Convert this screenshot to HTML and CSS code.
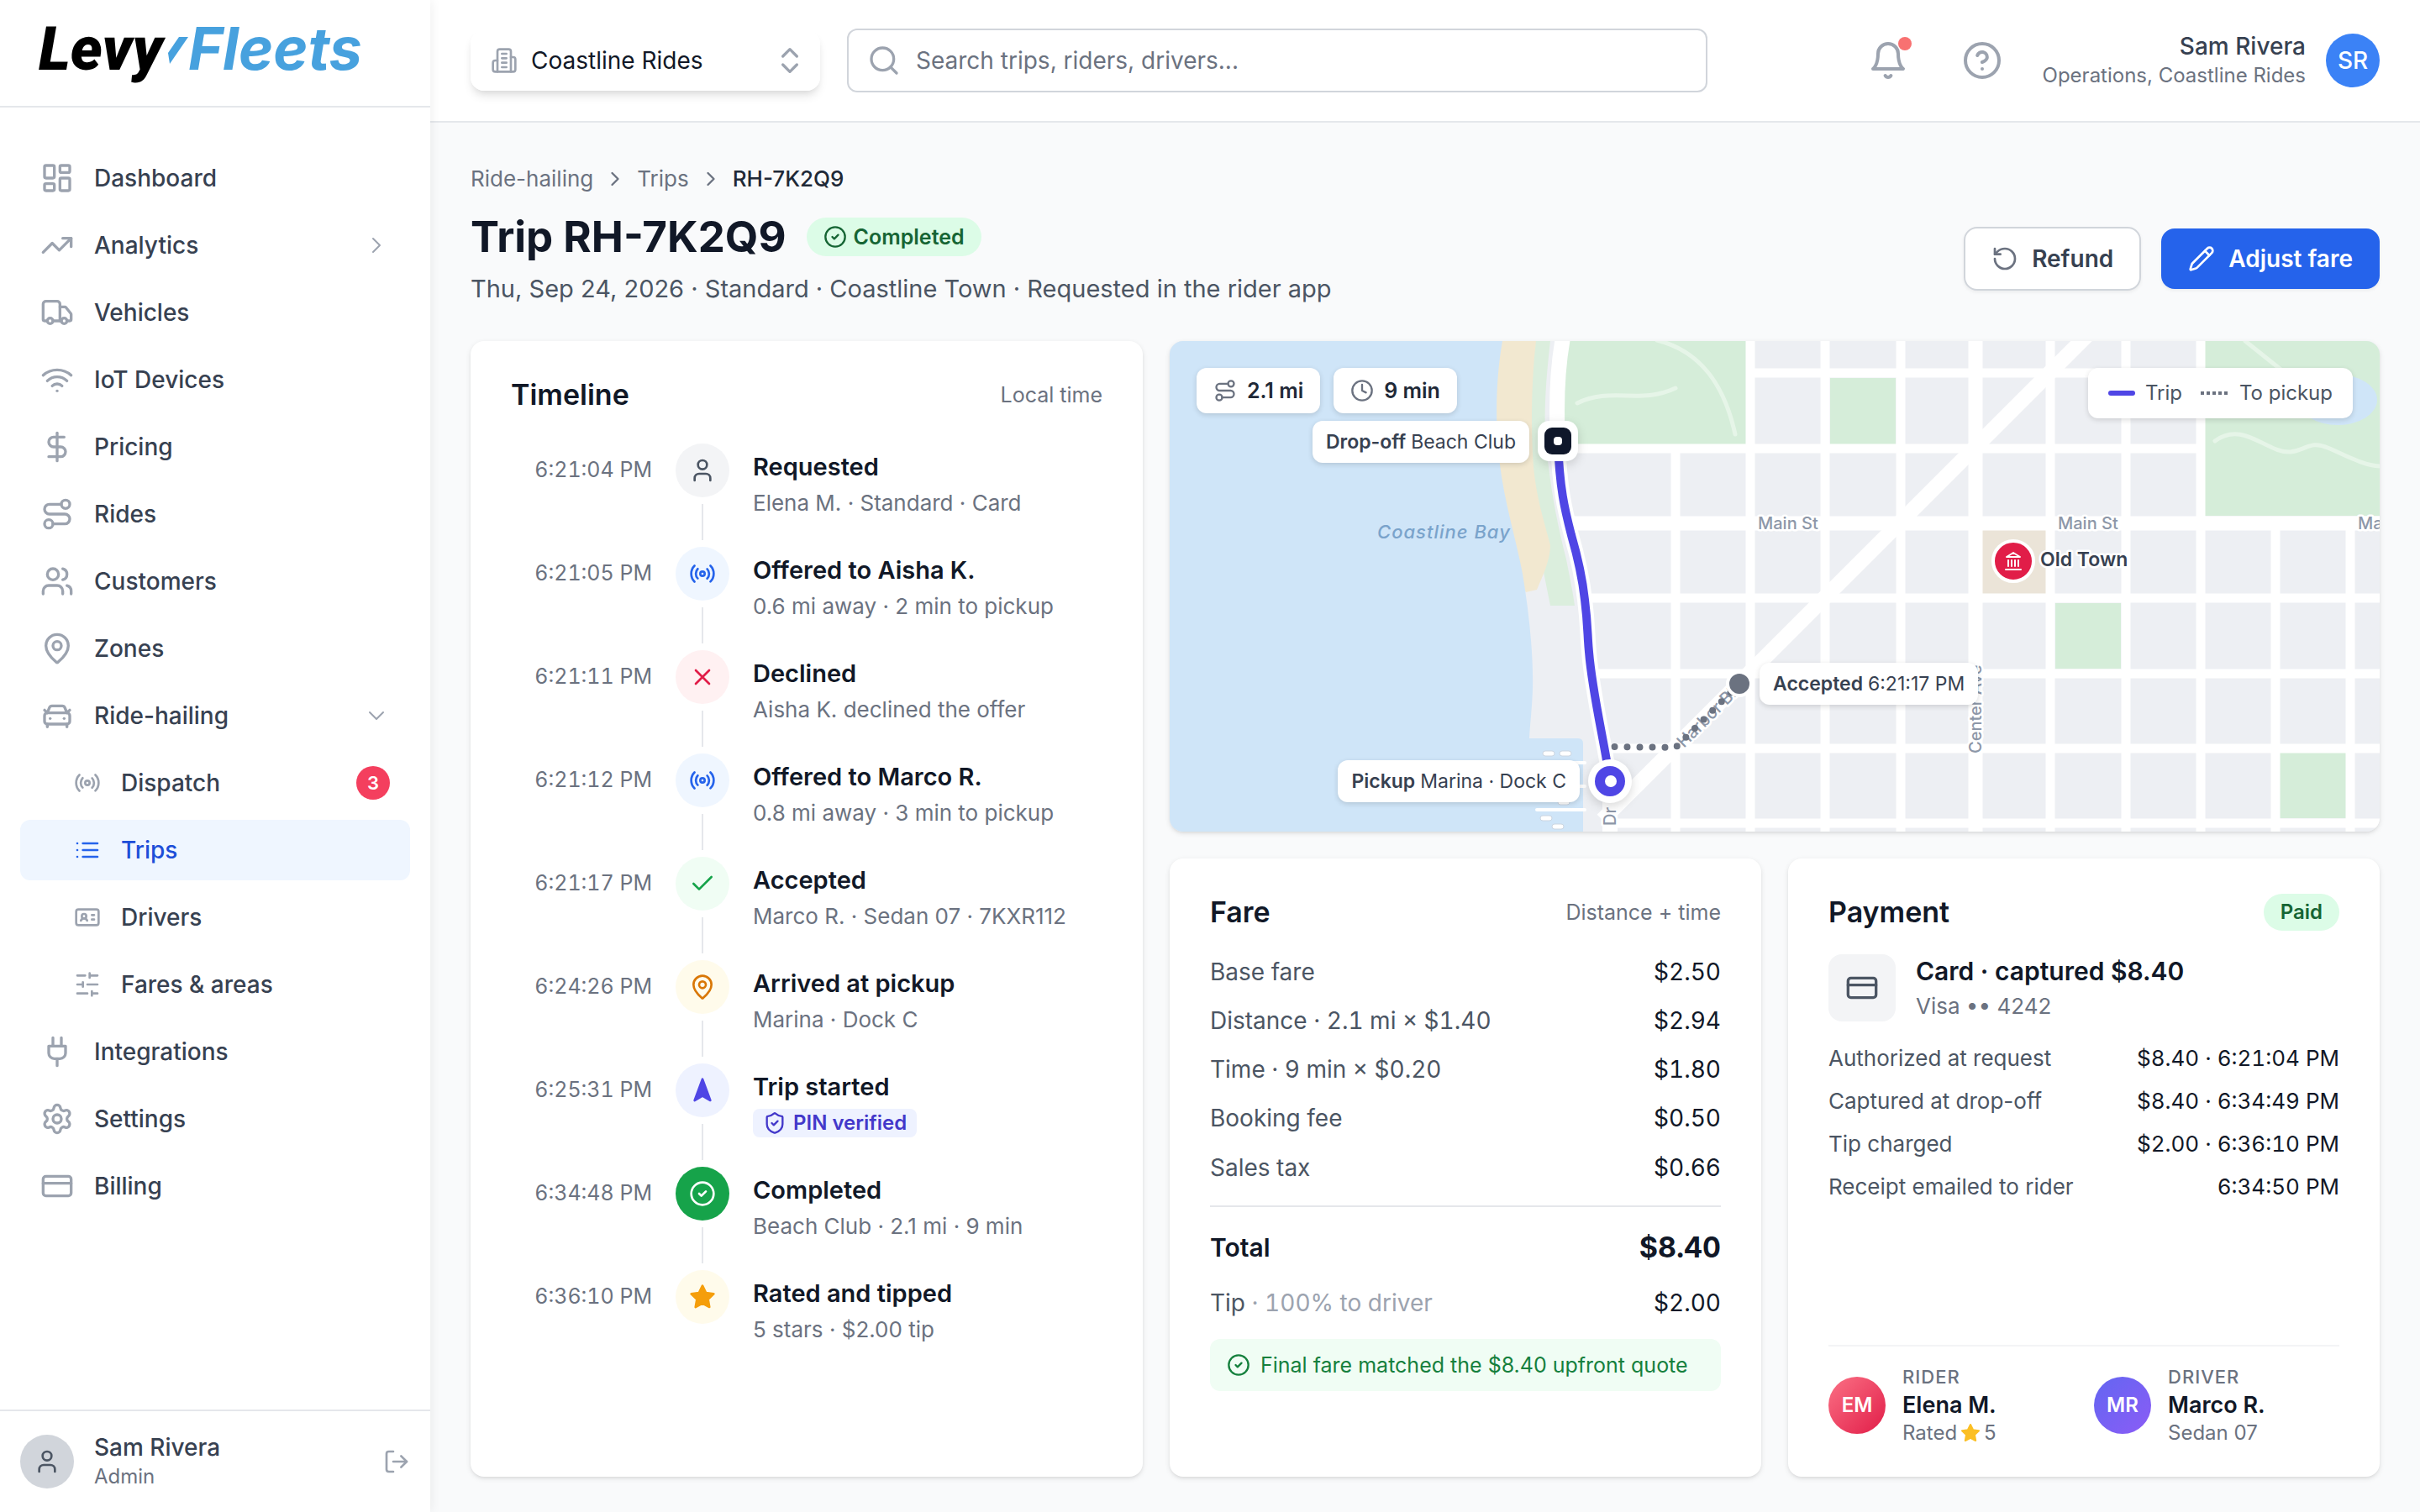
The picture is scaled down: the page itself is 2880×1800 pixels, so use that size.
FILE: index.html
```html
<!DOCTYPE html>
<html lang="en">
<head>
<meta charset="utf-8">
<meta name="viewport" content="width=device-width, initial-scale=1">
<title>Trip RH-7K2Q9 · Levy Fleets</title>
<link rel="stylesheet" href="styles.css">
</head>
<body>
<svg class="sprite" aria-hidden="true">
  <symbol id="i-dashboard" viewBox="0 0 24 24"><rect x="3" y="3" width="7" height="9" rx="1"/><rect x="14" y="3" width="7" height="5" rx="1"/><rect x="14" y="12" width="7" height="9" rx="1"/><rect x="3" y="16" width="7" height="5" rx="1"/></symbol>
  <symbol id="i-trend" viewBox="0 0 24 24"><path d="M22 7l-8.500 8.500-5-5L2 17"/><path d="M16 7h6v6"/></symbol>
  <symbol id="i-truck" viewBox="0 0 24 24"><path d="M14 18V6a2 2 0 0 0-2-2H4a2 2 0 0 0-2 2v11a1 1 0 0 0 1 1h2"/><path d="M15 18H9"/><path d="M19 18h2a1 1 0 0 0 1-1v-3.650a1 1 0 0 0-.22-.624l-3.480-4.350A1 1 0 0 0 17.520 8H14"/><circle cx="17" cy="18" r="2"/><circle cx="7" cy="18" r="2"/></symbol>
  <symbol id="i-wifi" viewBox="0 0 24 24"><path d="M12 20h.01"/><path d="M2 8.820a15 15 0 0 1 20 0"/><path d="M5 12.859a10 10 0 0 1 14 0"/><path d="M8.500 16.429a5 5 0 0 1 7 0"/></symbol>
  <symbol id="i-dollar" viewBox="0 0 24 24"><path d="M12 2v20"/><path d="M17 5H9.500a3.500 3.500 0 0 0 0 7h5a3.500 3.500 0 0 1 0 7H6"/></symbol>
  <symbol id="i-route" viewBox="0 0 24 24"><circle cx="6" cy="19" r="3"/><path d="M9 19h8.500a3.500 3.500 0 0 0 0-7h-11a3.500 3.500 0 0 1 0-7H15"/><circle cx="18" cy="5" r="3"/></symbol>
  <symbol id="i-users" viewBox="0 0 24 24"><path d="M16 21v-2a4 4 0 0 0-4-4H6a4 4 0 0 0-4 4v2"/><circle cx="9" cy="7" r="4"/><path d="M22 21v-2a4 4 0 0 0-3-3.870"/><path d="M16 3.130a4 4 0 0 1 0 7.750"/></symbol>
  <symbol id="i-pin" viewBox="0 0 24 24"><path d="M20 10c0 4.993-5.539 10.193-7.399 11.799a1 1 0 0 1-1.202 0C9.539 20.193 4 14.993 4 10a8 8 0 0 1 16 0"/><circle cx="12" cy="10" r="3"/></symbol>
  <symbol id="i-car" viewBox="0 0 24 24"><path d="m21 8-2 2-1.500-3.700A2 2 0 0 0 15.646 5H8.400a2 2 0 0 0-1.903 1.257L5 10 3 8"/><path d="M7 14h.01"/><path d="M17 14h.01"/><rect x="3" y="10" width="18" height="8" rx="2"/><path d="M5 18v2"/><path d="M19 18v2"/></symbol>
  <symbol id="i-radio" viewBox="0 0 24 24"><path d="M4.900 19.100C1 15.200 1 8.800 4.900 4.900"/><path d="M7.800 16.200c-2.300-2.300-2.300-6.100 0-8.500"/><circle cx="12" cy="12" r="2"/><path d="M16.200 7.800c2.300 2.300 2.300 6.100 0 8.500"/><path d="M19.100 4.900C23 8.800 23 15.100 19.100 19"/></symbol>
  <symbol id="i-list" viewBox="0 0 24 24"><path d="M3 6h.01M3 12h.01M3 18h.01M8 6h13M8 12h13M8 18h13"/></symbol>
  <symbol id="i-idcard" viewBox="0 0 24 24"><path d="M16 10h2M16 14h2"/><path d="M6.170 15a3 3 0 0 1 5.660 0"/><circle cx="9" cy="11" r="2"/><rect x="2" y="5" width="20" height="14" rx="2"/></symbol>
  <symbol id="i-sliders" viewBox="0 0 24 24"><path d="M21 4h-7M10 4H3M21 12h-9M8 12H3M21 20h-5M12 20H3M14 2v4M8 10v4M16 18v4"/></symbol>
  <symbol id="i-plug" viewBox="0 0 24 24"><path d="M12 22v-5M9 8V2M15 8V2"/><path d="M18 8v5a4 4 0 0 1-4 4h-4a4 4 0 0 1-4-4V8Z"/></symbol>
  <symbol id="i-settings" viewBox="0 0 24 24"><path d="M9.671 4.136a2.340 2.340 0 0 1 4.659 0 2.340 2.340 0 0 0 3.319 1.915 2.340 2.340 0 0 1 2.330 4.033 2.340 2.340 0 0 0 0 3.831 2.340 2.340 0 0 1-2.330 4.033 2.340 2.340 0 0 0-3.319 1.915 2.340 2.340 0 0 1-4.659 0 2.340 2.340 0 0 0-3.320-1.915 2.340 2.340 0 0 1-2.330-4.033 2.340 2.340 0 0 0 0-3.831A2.340 2.340 0 0 1 6.350 6.051a2.340 2.340 0 0 0 3.319-1.915"/><circle cx="12" cy="12" r="3"/></symbol>
  <symbol id="i-card" viewBox="0 0 24 24"><rect x="2" y="5" width="20" height="14" rx="2"/><path d="M2 10h20"/></symbol>
  <symbol id="i-user" viewBox="0 0 24 24"><path d="M19 21v-2a4 4 0 0 0-4-4H9a4 4 0 0 0-4 4v2"/><circle cx="12" cy="7" r="4"/></symbol>
  <symbol id="i-logout" viewBox="0 0 24 24"><path d="M9 21H5a2 2 0 0 1-2-2V5a2 2 0 0 1 2-2h4"/><path d="m16 17 5-5-5-5"/><path d="M21 12H9"/></symbol>
  <symbol id="i-building" viewBox="0 0 24 24"><path d="M6 22V4a2 2 0 0 1 2-2h8a2 2 0 0 1 2 2v18Z"/><path d="M6 12H4a2 2 0 0 0-2 2v6a2 2 0 0 0 2 2h2"/><path d="M18 9h2a2 2 0 0 1 2 2v9a2 2 0 0 1-2 2h-2"/><path d="M10 6h4M10 10h4M10 14h4M10 18h4"/></symbol>
  <symbol id="i-updown" viewBox="0 0 24 24"><path d="m7 15 5 5 5-5"/><path d="m7 9 5-5 5 5"/></symbol>
  <symbol id="i-search" viewBox="0 0 24 24"><circle cx="11" cy="11" r="8"/><path d="m21 21-4.300-4.300"/></symbol>
  <symbol id="i-bell" viewBox="0 0 24 24"><path d="M6 8a6 6 0 0 1 12 0c0 7 3 9 3 9H3s3-2 3-9"/><path d="M10.300 21a1.940 1.940 0 0 0 3.400 0"/></symbol>
  <symbol id="i-help" viewBox="0 0 24 24"><circle cx="12" cy="12" r="10"/><path d="M9.090 9a3 3 0 0 1 5.830 1c0 2-3 3-3 3"/><path d="M12 17h.01"/></symbol>
  <symbol id="i-right" viewBox="0 0 24 24"><path d="m9 18 6-6-6-6"/></symbol>
  <symbol id="i-down" viewBox="0 0 24 24"><path d="m6 9 6 6 6-6"/></symbol>
  <symbol id="i-check-circle" viewBox="0 0 24 24"><circle cx="12" cy="12" r="10"/><path d="m9 12 2 2 4-4"/></symbol>
  <symbol id="i-check" viewBox="0 0 24 24"><path d="M20 6 9 17l-5-5"/></symbol>
  <symbol id="i-x" viewBox="0 0 24 24"><path d="M18 6 6 18M6 6l12 12"/></symbol>
  <symbol id="i-nav" viewBox="0 0 24 24"><path fill="currentColor" d="m12 2 7 19-7-4-7 4z"/></symbol>
  <symbol id="i-star" viewBox="0 0 24 24"><path fill="currentColor" d="M12 2l3.090 6.260L22 9.270l-5 4.870 1.180 6.880L12 17.770l-6.180 3.250L7 14.140 2 9.270l6.910-1.010z"/></symbol>
  <symbol id="i-shield" viewBox="0 0 24 24"><path d="M20 13c0 5-3.500 7.500-7.660 8.950a1 1 0 0 1-.67-.01C7.500 20.500 4 18 4 13V6a1 1 0 0 1 1-1c2 0 4.500-1.200 6.240-2.720a1.170 1.170 0 0 1 1.520 0C14.510 3.810 17 5 19 5a1 1 0 0 1 1 1z"/><path d="m9 12 2 2 4-4"/></symbol>
  <symbol id="i-undo" viewBox="0 0 24 24"><path d="M3 12a9 9 0 1 0 9-9 9.750 9.750 0 0 0-6.740 2.740L3 8"/><path d="M3 3v5h5"/></symbol>
  <symbol id="i-pencil" viewBox="0 0 24 24"><path d="M21.174 6.812a1 1 0 0 0-3.986-3.987L3.842 16.174a2 2 0 0 0-.5.83l-1.321 4.352a.5.5 0 0 0 .623.622l4.353-1.320a2 2 0 0 0 .83-.497z"/><path d="m15 5 4 4"/></symbol>
  <symbol id="i-clock" viewBox="0 0 24 24"><circle cx="12" cy="12" r="10"/><path d="M12 6v6l4 2"/></symbol>
  <symbol id="i-landmark" viewBox="0 0 24 24"><path d="M3 22h18M6 18v-7M10 18v-7M14 18v-7M18 18v-7"/><path d="m12 2 8 5H4z"/></symbol>
</svg>

<div class="app">
  <aside class="sidebar">
    <a class="brand" href="#" aria-label="Levy Fleets">
      <svg class="logo" viewBox="0 0 416 80">
        <text class="logo-levy" x="-2" y="67">Levy</text>
        <path class="logo-mark" d="M165 28h11l-22 32-2-13z"/>
        <text class="logo-fleets" x="176" y="67">Fleets</text>
      </svg>
    </a>
    <nav class="nav" aria-label="Main">
      <a class="nav-item" href="#"><svg class="icon icon-40"><use href="#i-dashboard"/></svg><span>Dashboard</span></a>
      <a class="nav-item" href="#"><svg class="icon icon-40"><use href="#i-trend"/></svg><span>Analytics</span><svg class="icon icon-32 thin end"><use href="#i-right"/></svg></a>
      <a class="nav-item" href="#"><svg class="icon icon-40"><use href="#i-truck"/></svg><span>Vehicles</span></a>
      <a class="nav-item" href="#"><svg class="icon icon-40"><use href="#i-wifi"/></svg><span>IoT Devices</span></a>
      <a class="nav-item" href="#"><svg class="icon icon-40"><use href="#i-dollar"/></svg><span>Pricing</span></a>
      <a class="nav-item" href="#"><svg class="icon icon-40"><use href="#i-route"/></svg><span>Rides</span></a>
      <a class="nav-item" href="#"><svg class="icon icon-40"><use href="#i-users"/></svg><span>Customers</span></a>
      <a class="nav-item" href="#"><svg class="icon icon-40"><use href="#i-pin"/></svg><span>Zones</span></a>
      <a class="nav-item" href="#"><svg class="icon icon-40"><use href="#i-car"/></svg><span>Ride-hailing</span><svg class="icon icon-32 thin end"><use href="#i-down"/></svg></a>
      <a class="nav-item sub" href="#"><svg class="icon icon-32"><use href="#i-radio"/></svg><span>Dispatch</span><span class="count end">3</span></a>
      <a class="nav-item sub active" href="#" aria-current="page"><svg class="icon icon-32"><use href="#i-list"/></svg><span>Trips</span></a>
      <a class="nav-item sub" href="#"><svg class="icon icon-32"><use href="#i-idcard"/></svg><span>Drivers</span></a>
      <a class="nav-item sub" href="#"><svg class="icon icon-32"><use href="#i-sliders"/></svg><span>Fares &amp; areas</span></a>
      <a class="nav-item" href="#"><svg class="icon icon-40"><use href="#i-plug"/></svg><span>Integrations</span></a>
      <a class="nav-item" href="#"><svg class="icon icon-40"><use href="#i-settings"/></svg><span>Settings</span></a>
      <a class="nav-item" href="#"><svg class="icon icon-40"><use href="#i-card"/></svg><span>Billing</span></a>
    </nav>
    <div class="account">
      <span class="account-avatar"><svg class="icon icon-32"><use href="#i-user"/></svg></span>
      <div class="who">
        <div class="who-name">Sam Rivera</div>
        <div class="who-role">Admin</div>
      </div>
      <button class="bare end" type="button" aria-label="Log out"><svg class="icon icon-32"><use href="#i-logout"/></svg></button>
    </div>
  </aside>

  <div class="page">
    <header class="topbar">
      <div class="org">
        <svg class="icon icon-32 org-icon"><use href="#i-building"/></svg>
        <select class="org-select" aria-label="Organization"><option>Coastline Rides</option></select>
        <svg class="icon icon-40 org-arrows"><use href="#i-updown"/></svg>
      </div>
      <div class="search">
        <svg class="icon icon-40 search-icon"><use href="#i-search"/></svg>
        <input class="search-input" type="search" aria-label="Search" placeholder="Search trips, riders, drivers...">
      </div>
      <div class="tools">
        <button class="bare bell" type="button" aria-label="Notifications"><svg class="icon icon-48"><use href="#i-bell"/></svg><span class="dot"></span></button>
        <button class="bare" type="button" aria-label="Help"><svg class="icon icon-48"><use href="#i-help"/></svg></button>
        <div class="profile">
          <div class="who right">
            <div class="who-name">Sam Rivera</div>
            <div class="who-role">Operations, Coastline Rides</div>
          </div>
          <span class="profile-avatar">SR</span>
        </div>
      </div>
    </header>

    <main class="content">
      <nav class="crumbs" aria-label="Breadcrumb">
        <a href="#">Ride-hailing</a>
        <svg class="icon icon-28"><use href="#i-right"/></svg>
        <a href="#">Trips</a>
        <svg class="icon icon-28"><use href="#i-right"/></svg>
        <span class="crumb-here">RH-7K2Q9</span>
      </nav>
      <div class="heading">
        <div>
          <div class="title-row">
            <h1>Trip RH-7K2Q9</h1>
            <span class="badge"><svg class="icon icon-28"><use href="#i-check-circle"/></svg>Completed</span>
          </div>
          <p class="subtitle">Thu, Sep 24, 2026 · Standard · Coastline Town · Requested in the rider app</p>
        </div>
        <div class="actions">
          <button class="btn btn-plain" type="button"><svg class="icon icon-32"><use href="#i-undo"/></svg>Refund</button>
          <button class="btn btn-primary" type="button"><svg class="icon icon-32"><use href="#i-pencil"/></svg>Adjust fare</button>
        </div>
      </div>

      <div class="board">
        <section class="card timeline">
          <div class="card-head"><h2>Timeline</h2><span class="hint">Local time</span></div>
          <ol class="events">
            <li class="event"><time>6:21:04 PM</time><span class="node gray"><svg class="icon icon-32"><use href="#i-user"/></svg></span><div><h3>Requested</h3><p>Elena M. · Standard · Card</p></div></li>
            <li class="event"><time>6:21:05 PM</time><span class="node blue"><svg class="icon icon-32"><use href="#i-radio"/></svg></span><div><h3>Offered to Aisha K.</h3><p>0.6 mi away · 2 min to pickup</p></div></li>
            <li class="event"><time>6:21:11 PM</time><span class="node rose"><svg class="icon icon-32"><use href="#i-x"/></svg></span><div><h3>Declined</h3><p>Aisha K. declined the offer</p></div></li>
            <li class="event"><time>6:21:12 PM</time><span class="node blue"><svg class="icon icon-32"><use href="#i-radio"/></svg></span><div><h3>Offered to Marco R.</h3><p>0.8 mi away · 3 min to pickup</p></div></li>
            <li class="event"><time>6:21:17 PM</time><span class="node green"><svg class="icon icon-32"><use href="#i-check"/></svg></span><div><h3>Accepted</h3><p>Marco R. · Sedan 07 · 7KXR112</p></div></li>
            <li class="event"><time>6:24:26 PM</time><span class="node amber"><svg class="icon icon-32"><use href="#i-pin"/></svg></span><div><h3>Arrived at pickup</h3><p>Marina · Dock C</p></div></li>
            <li class="event"><time>6:25:31 PM</time><span class="node indigo"><svg class="icon icon-32"><use href="#i-nav"/></svg></span><div><h3>Trip started</h3><span class="pin-tag"><svg class="icon icon-28"><use href="#i-shield"/></svg>PIN verified</span></div></li>
            <li class="event"><time>6:34:48 PM</time><span class="node done"><svg class="icon icon-32"><use href="#i-check-circle"/></svg></span><div><h3>Completed</h3><p>Beach Club · 2.1 mi · 9 min</p></div></li>
            <li class="event"><time>6:36:10 PM</time><span class="node star"><svg class="icon icon-32"><use href="#i-star"/></svg></span><div><h3>Rated and tipped</h3><p>5 stars · $2.00 tip</p></div></li>
          </ol>
        </section>

        <div class="side">
          <section class="map" aria-label="Trip map">
            <svg class="map-art" viewBox="0 0 1440 584" preserveAspectRatio="xMidYMid slice">
              <rect class="land" width="1440" height="584"/>
              <path class="park" d="M470 0H686V123H466z"/>
              <path class="park" d="M1232 0H1440V208H1232z"/>
              <ellipse class="water" cx="1390" cy="70" rx="47" ry="30"/>
              <g class="trail">
                <path d="M580-1C632 12 660 52 673 111"/>
                <path d="M485 74C525 54 560 76 602 56"/>
                <path d="M1280 0L1325 36"/>
                <path d="M1244 119C1278 94 1306 134 1334 132C1352 130 1358 118 1378 127C1400 136 1420 148 1440 149"/>
              </g>
              <path class="park" d="M786 44h78v79h-78zM1054 312h78v78h-78zM1321 490h79v78h-79z"/>
              <path class="plaza" d="M967 225h76v76h-76z"/>
              <path class="strand" d="M430 0H453C446 60 444 110 451 150C456 190 462 220 472 260C477 285 480 300 482 315H453L444 270L425 150z"/>
              <path class="sand" d="M380 0H436C430 50 430 110 433 150C437 190 446 215 453 243C453 260 444 280 437 296L424 299L400 260L370 100z"/>
              <path class="water" d="M0 0H396C388 45 387 100 393 147C398 190 412 235 420 277C428 325 433 375 432 415C431 440 429 455 428 473H486Q492 473 492 479V584H0z"/>
              <g class="street">
                <path d="M690 38H1227M464 128H1227M490 306H1440M500 396H1440M518 485H1440M526 574H1440"/>
                <path d="M602 128V584M691 0V584M780 0V584M870 0V584M1048 0V584M1138 0V584M1227 0V584M1316 217V584M1405 217V584"/>
              </g>
              <path class="avenue" d="M474 217H1440M959 0V584"/>
              <path class="boulevard" d="M515 570L1095-10"/>
              <path class="shore" d="M468-4C460 40 460 80 462 120C464 175 470 200 478 231C487 262 492 290 494 308C498 340 497 350 499 370C503 420 518 480 524 524V590"/>
              <g class="pier">
                <path d="M437 502H494M437 530H494M437 558H494"/>
              </g>
              <g class="boat">
                <rect x="444" y="488" width="14" height="6" rx="3"/>
                <rect x="464" y="488" width="14" height="6" rx="3"/>
                <rect x="462" y="546" width="14" height="6" rx="3"/>
                <rect x="441" y="565" width="14" height="6" rx="3"/>
                <rect x="455" y="575" width="14" height="6" rx="3"/>
              </g>
              <g class="street-name">
                <text x="700" y="224">Main St</text>
                <text x="1057" y="224">Main St</text>
                <text x="1414" y="224">Main St</text>
                <text transform="translate(966 491) rotate(-90)">Center Ave</text>
                <text transform="translate(612 485) rotate(-45)">Harbor Blvd</text>
                <text transform="translate(531 577) rotate(-90)">Dr</text>
              </g>
              <text class="bay-name" x="247" y="235">Coastline Bay</text>
              <path class="approach" d="M678 408L602 484L529 483"/>
              <path class="route-case" d="M462 120C464 175 470 200 478 231C487 262 492 290 494 308C498 340 497 350 499 370C503 420 518 480 524 524"/>
              <path class="route" d="M462 120C464 175 470 200 478 231C487 262 492 290 494 308C498 340 497 350 499 370C503 420 518 480 524 524"/>
              <circle class="accept-dot" cx="678" cy="408" r="14"/>
              <g class="marker">
                <rect fill="#fff" x="438" y="95" width="48" height="48" rx="14"/>
                <rect fill="#0f172a" x="446" y="103" width="32" height="32" rx="9"/>
                <rect fill="#fff" x="457" y="114" width="10" height="10" rx="4"/>
              </g>
              <g class="marker">
                <circle fill="#fff" cx="524" cy="524" r="26"/>
                <circle fill="#4f46e5" cx="524" cy="524" r="18"/>
                <circle fill="#fff" cx="525" cy="524" r="7"/>
              </g>
              <circle class="place" cx="1004" cy="262" r="24"/>
              <svg class="place-icon" x="992" y="250" width="24" height="24"><use href="#i-landmark"/></svg>
              <text class="place-name" x="1036" y="268">Old Town</text>
            </svg>
            <div class="stats">
              <span class="chip"><svg class="icon icon-28"><use href="#i-route"/></svg>2.1 mi</span>
              <span class="chip"><svg class="icon icon-28"><use href="#i-clock"/></svg>9 min</span>
            </div>
            <div class="legend">
              <span class="key"><i class="line-solid"></i>Trip</span>
              <span class="key"><i class="line-dots"></i>To pickup</span>
            </div>
            <span class="tip tip-drop"><b>Drop-off</b> Beach Club</span>
            <span class="tip tip-pick"><b>Pickup</b> Marina · Dock C</span>
            <span class="tip tip-accept"><b>Accepted</b> 6:21:17 PM</span>
          </section>

          <div class="pair">
            <section class="card">
              <div class="card-head"><h2>Fare</h2><span class="hint">Distance + time</span></div>
              <table class="fare">
                <tbody>
                  <tr><th scope="row">Base fare</th><td>$2.50</td></tr>
                  <tr><th scope="row">Distance · 2.1 mi × $1.40</th><td>$2.94</td></tr>
                  <tr><th scope="row">Time · 9 min × $0.20</th><td>$1.80</td></tr>
                  <tr><th scope="row">Booking fee</th><td>$0.50</td></tr>
                  <tr class="last"><th scope="row">Sales tax</th><td>$0.66</td></tr>
                </tbody>
                <tfoot>
                  <tr class="total"><th scope="row">Total</th><td>$8.40</td></tr>
                  <tr class="tips"><th scope="row">Tip <span class="faint">· 100% to driver</span></th><td>$2.00</td></tr>
                </tfoot>
              </table>
              <p class="note"><svg class="icon icon-28"><use href="#i-check-circle"/></svg>Final fare matched the $8.40 upfront quote</p>
            </section>

            <section class="card payment">
              <div class="card-head"><h2>Payment</h2><span class="badge paid">Paid</span></div>
              <div class="method">
                <span class="method-icon"><svg class="icon icon-40"><use href="#i-card"/></svg></span>
                <div>
                  <div class="method-title">Card · captured $8.40</div>
                  <div class="method-sub">Visa •• 4242</div>
                </div>
              </div>
              <table class="ledger">
                <tbody>
                  <tr><th scope="row">Authorized at request</th><td>$8.40 · 6:21:04 PM</td></tr>
                  <tr><th scope="row">Captured at drop-off</th><td>$8.40 · 6:34:49 PM</td></tr>
                  <tr><th scope="row">Tip charged</th><td>$2.00 · 6:36:10 PM</td></tr>
                  <tr><th scope="row">Receipt emailed to rider</th><td>6:34:50 PM</td></tr>
                </tbody>
              </table>
              <div class="people">
                <div class="person">
                  <span class="face face-rider">EM</span>
                  <div>
                    <div class="person-kind">RIDER</div>
                    <div class="person-name">Elena M.</div>
                    <div class="person-sub">Rated <svg class="icon rating"><use href="#i-star"/></svg>5</div>
                  </div>
                </div>
                <div class="person">
                  <span class="face face-driver">MR</span>
                  <div>
                    <div class="person-kind">DRIVER</div>
                    <div class="person-name">Marco R.</div>
                    <div class="person-sub">Sedan 07</div>
                  </div>
                </div>
              </div>
            </section>
          </div>
        </div>
      </div>
    </main>
  </div>
</div>
</body>
</html>
```
FILE: styles.css
```css
* { box-sizing: border-box; }

body {
  margin: 0;
  font-family: Inter, "Liberation Sans", sans-serif;
  font-size: 28px;
  line-height: 40px;
  color: #111827;
  background: #f9fafb;
}

h1, h2, h3, p, ol { margin: 0; padding: 0; }
a { color: inherit; text-decoration: none; }
button, select, input { font: inherit; color: inherit; }

.sprite { position: absolute; width: 0; height: 0; overflow: hidden; }

.icon {
  flex: none;
  display: block;
  fill: none;
  stroke: currentColor;
  stroke-width: 2;
  stroke-linecap: round;
  stroke-linejoin: round;
}
.icon-28 { width: 28px; height: 28px; }
.icon-32 { width: 32px; height: 32px; }
.icon-40 { width: 40px; height: 40px; }
.icon-48 { width: 48px; height: 48px; }
.thin { stroke-width: 1.5; }
.end { margin-left: auto; }

.app { display: flex; min-height: 100vh; }

/* Sidebar */
.sidebar {
  position: relative;
  z-index: 2;
  flex: none;
  width: 512px;
  display: flex;
  flex-direction: column;
  background: #fff;
  box-shadow: 2px 0 12px rgba(0, 0, 0, .06);
}
.brand {
  display: block;
  height: 128px;
  padding: 16px 48px;
  border-bottom: 2px solid #e5e7eb;
}
.logo { display: block; width: 416px; height: 80px; overflow: visible; }
.logo text { font-style: italic; }
.logo-levy { font-family: Roboto, sans-serif; font-weight: 900; font-size: 72px; fill: #000; }
.logo-fleets { font-family: Inter, sans-serif; font-weight: 700; font-size: 70px; }
.logo-fleets, .logo-mark { fill: #47a1de; }

.nav {
  flex: 1;
  display: flex;
  flex-direction: column;
  gap: 8px;
  padding: 48px 24px;
}
.nav-item {
  display: flex;
  align-items: center;
  gap: 24px;
  height: 72px;
  padding: 0 24px;
  border-radius: 12px;
  font-weight: 500;
  color: #374151;
}
.nav-item .icon { color: #9ca3af; }
.nav-item.sub { padding-left: 64px; }
.nav-item.active { background: #eff6ff; color: #1d4ed8; }
.nav-item.active .icon { color: #2563eb; }
.count {
  width: 40px;
  height: 40px;
  border-radius: 50%;
  background: #f43f5e;
  color: #fff;
  font-size: 22px;
  font-weight: 600;
  text-align: center;
}

.account {
  display: flex;
  align-items: center;
  gap: 24px;
  height: 122px;
  padding: 0 24px;
  border-top: 2px solid #e5e7eb;
}
.account-avatar, .profile-avatar {
  flex: none;
  display: grid;
  place-items: center;
  width: 64px;
  height: 64px;
  border-radius: 50%;
}
.account-avatar { background: #d1d5db; color: #4b5563; }
.profile-avatar { background: #3b82f6; color: #fff; font-weight: 500; }
.who-name { line-height: 36px; font-weight: 500; color: #374151; }
.who-role { line-height: 34px; font-size: 24px; color: #6b7280; }
.who.right { text-align: right; }
.bare {
  position: relative;
  padding: 0;
  border: 0;
  background: none;
  color: #9ca3af;
  cursor: pointer;
}

/* Top bar */
.page { flex: 1; min-width: 0; display: flex; flex-direction: column; }
.topbar {
  display: flex;
  align-items: center;
  gap: 32px;
  height: 146px;
  padding: 0 48px;
  background: #fff;
  border-bottom: 2px solid #e5e7eb;
}
.org {
  position: relative;
  flex: none;
  width: 416px;
  border-radius: 16px;
  box-shadow: 0 8px 12px -2px rgba(0, 0, 0, .1), 0 4px 8px -4px rgba(0, 0, 0, .1);
}
.org-select {
  display: block;
  width: 100%;
  height: 72px;
  padding: 0 72px;
  border: 0;
  border-radius: 16px;
  background: #fff;
  appearance: none;
  color: #111827;
}
.org-icon, .org-arrows, .search-icon { position: absolute; top: 50%; translate: 0 -50%; color: #9ca3af; pointer-events: none; }
.org-icon { left: 24px; }
.org-arrows { right: 16px; }
.search { position: relative; flex: 1; max-width: 1024px; }
.search-icon { left: 24px; }
.search-input {
  display: block;
  width: 100%;
  height: 76px;
  padding: 0 24px 0 80px;
  border: 2px solid #d1d5db;
  border-radius: 12px;
  background: #fff;
}
.search-input::placeholder { color: #6b7280; opacity: 1; }
.tools { display: flex; align-items: center; gap: 64px; margin-left: auto; }
.dot {
  position: absolute;
  top: -4px;
  right: -4px;
  width: 16px;
  height: 16px;
  border-radius: 50%;
  background: #f87171;
}
.profile { display: flex; align-items: center; gap: 24px; margin-left: -16px; }

/* Page heading */
.content { flex: 1; display: flex; flex-direction: column; padding: 48px 48px 42px; }
.crumbs {
  display: flex;
  align-items: center;
  gap: 12px;
  height: 38px;
  margin-bottom: 18px;
  font-size: 26px;
  color: #6b7280;
}
.crumb-here { font-weight: 500; color: #1f2937; }
.heading { display: flex; align-items: center; justify-content: space-between; margin-bottom: 40px; }
.title-row { display: flex; align-items: center; gap: 24px; margin-bottom: 8px; }
h1 { font-size: 51px; line-height: 64px; font-weight: 700; }
.badge {
  display: inline-flex;
  align-items: center;
  gap: 8px;
  height: 46px;
  padding: 0 20px;
  border-radius: 24px;
  background: #dcfce7;
  color: #166534;
  font-size: 25px;
  font-weight: 600;
}
.subtitle { font-size: 29px; line-height: 44px; color: #4b5563; }
.actions { display: flex; align-items: center; gap: 24px; }
.btn {
  display: flex;
  align-items: center;
  gap: 16px;
  height: 72px;
  padding: 0 32px;
  border: 0;
  border-radius: 16px;
  font-weight: 600;
  box-shadow: 0 2px 4px rgba(0, 0, 0, .06);
}
.btn-plain { height: 76px; padding: 0 31px; border: 2px solid #d1d5db; background: #fff; color: #374151; }
.btn-plain .icon { color: #6b7280; }
.btn-primary { background: #2563eb; color: #fff; }

/* Board */
.board { flex: 1; display: grid; grid-template-columns: 5fr 9fr; gap: 32px; }
.side { display: flex; flex-direction: column; gap: 32px; min-width: 0; }
.pair { flex: 1; display: grid; grid-template-columns: 1fr 1fr; gap: 32px; }
.card, .map {
  border-radius: 16px;
  box-shadow: 0 2px 6px rgba(0, 0, 0, .1), 0 2px 4px -2px rgba(0, 0, 0, .1);
}
.card { background: #fff; padding: 40px 48px; }
.card-head { display: flex; align-items: center; justify-content: space-between; height: 48px; }
h2 { font-size: 34px; line-height: 48px; font-weight: 600; }
.hint { font-size: 25px; color: #6b7280; }

.events { list-style: none; margin-top: 34px; }
.event {
  position: relative;
  display: grid;
  grid-template-columns: 168px 64px 1fr;
  column-gap: 28px;
  height: 123px;
}
.event::after {
  content: "";
  position: absolute;
  left: 227px;
  top: 72px;
  bottom: 8px;
  width: 2px;
  background: #e5e7eb;
}
.event:last-child::after { display: none; }
.event time {
  line-height: 62px;
  font-size: 25px;
  text-align: right;
  color: #6b7280;
  font-variant-numeric: tabular-nums;
}
.node { display: grid; place-items: center; width: 64px; height: 64px; border-radius: 50%; }
.gray { background: #f3f4f6; color: #4b5563; }
.blue { background: #eff6ff; color: #2563eb; }
.rose { background: #fff1f2; color: #e11d48; }
.green { background: #f0fdf4; color: #16a34a; }
.amber { background: #fffbeb; color: #d97706; }
.indigo { background: #eef2ff; color: #4f46e5; }
.done { background: #16a34a; color: #fff; }
.star { background: #fffbeb; color: #f59e0b; }
.event h3 { padding-top: 8px; font-size: 29px; line-height: 40px; font-weight: 600; }
.event p { margin-top: 3px; font-size: 26px; line-height: 40px; color: #6b7280; }
.pin-tag {
  display: flex;
  width: fit-content;
  align-items: center;
  gap: 8px;
  height: 34px;
  margin-top: 6px;
  padding: 0 12px;
  border-radius: 8px;
  background: #eef2ff;
  color: #4338ca;
  font-size: 24px;
  font-weight: 600;
}

/* Map */
.map { position: relative; aspect-ratio: 1440 / 584; overflow: hidden; background: #edeff3; }
.map-art { display: block; width: 100%; height: 100%; }
.land { fill: #edeff3; }
.water { fill: #cfe5f8; }
.park { fill: #d5edd9; }
.strand { fill: #dbeedd; }
.sand { fill: #f2e8d0; }
.plaza { fill: #ebe4d8; }
.trail { fill: none; stroke: #e6f5e8; stroke-width: 5; stroke-linecap: round; }
.street { fill: none; stroke: #fff; stroke-width: 11; }
.avenue { fill: none; stroke: #fff; stroke-width: 17; }
.boulevard, .shore { fill: none; stroke: #fff; stroke-width: 18; }
.pier { stroke: #fff; stroke-width: 4; stroke-linecap: round; }
.boat { fill: #fff; stroke: #cbd5e1; stroke-width: 1; }
.street-name text, .bay-name, .place-name { font-family: Inter, sans-serif; }
.street-name text {
  font-size: 20px;
  font-weight: 500;
  fill: #8d97a8;
  stroke: #fff;
  stroke-width: 5;
  stroke-linejoin: round;
  paint-order: stroke;
}
.bay-name { font-size: 22px; font-style: italic; font-weight: 500; letter-spacing: 1px; fill: #7aa3cb; }
.place-name {
  font-size: 23px;
  font-weight: 600;
  fill: #374151;
  stroke: #fff;
  stroke-width: 5;
  stroke-linejoin: round;
  paint-order: stroke;
}
.approach { fill: none; stroke: #6b7280; stroke-width: 8; stroke-linecap: round; stroke-dasharray: 0 15; }
.route-case { fill: none; stroke: #fff; stroke-width: 16; }
.route { fill: none; stroke: #4f46e5; stroke-width: 10; }
.accept-dot { fill: #6b7280; stroke: #fff; stroke-width: 4; }
.marker { filter: drop-shadow(0 4px 6px rgba(0, 0, 0, .15)); }
.place { fill: #e11d48; stroke: #fff; stroke-width: 4; }
.place-icon { fill: none; stroke: #fff; stroke-width: 2; stroke-linecap: round; stroke-linejoin: round; }

.stats, .legend, .tip { position: absolute; }
.chip, .legend, .tip {
  display: flex;
  align-items: center;
  border-radius: 12px;
  background: #fff;
  box-shadow: 0 2px 6px rgba(0, 0, 0, .14);
  white-space: nowrap;
}
.stats { left: 32px; top: 32px; display: flex; gap: 16px; }
.chip { gap: 12px; height: 54px; padding: 0 20px; font-size: 25px; font-weight: 600; color: #1f2937; }
.chip .icon { color: #6b7280; }
.legend { right: 32px; top: 32px; gap: 22px; height: 60px; padding: 0 24px; font-size: 24px; color: #4b5563; }
.key { display: flex; align-items: center; gap: 12px; }
.line-solid { width: 32px; height: 6px; border-radius: 3px; background: #4f46e5; }
.line-dots { width: 34px; height: 4px; background: repeating-linear-gradient(90deg, #6b7280 0 4px, transparent 4px 7px); }
.tip { gap: 6px; height: 50px; padding: 0 16px; font-size: 23px; color: #374151; }
.tip b { font-weight: 600; }
.tip-drop { right: calc(100% * 1012 / 1440); top: calc(100% * 95 / 584); }
.tip-pick { right: calc(100% * 952 / 1440); top: calc(100% * 499 / 584); }
.tip-accept { left: calc(100% * 702 / 1440); top: calc(100% * 383 / 584); }

/* Fare */
table { width: 100%; border-collapse: collapse; }
th { padding: 0; text-align: left; font-weight: 400; color: #4b5563; }
td { padding: 0; text-align: right; font-variant-numeric: tabular-nums; }
.fare { margin-top: 18px; font-size: 28px; font-variant-numeric: tabular-nums; }
.fare th, .fare td { height: 58px; }
.fare .last th, .fare .last td { height: 76px; padding-bottom: 16px; border-bottom: 2px solid #e5e7eb; }
.fare .total th, .fare .total td { height: 76px; padding-top: 20px; color: #111827; }
.fare .total th { font-size: 30px; font-weight: 600; }
.fare .total td { font-size: 34px; font-weight: 700; }
.fare .tips th, .fare .tips td { height: 68px; padding-top: 10px; }
.faint { color: #9ca3af; }
.note {
  display: flex;
  align-items: center;
  gap: 12px;
  height: 62px;
  margin-top: 14px;
  padding: 0 20px;
  border-radius: 12px;
  background: #f0fdf4;
  color: #15803d;
  font-size: 25px;
}

/* Payment */
.payment { display: flex; flex-direction: column; padding-bottom: 36px; }
.paid { height: 44px; font-size: 24px; }
.method { display: flex; align-items: center; gap: 24px; margin: 24px 0 16px; }
.method-icon {
  display: grid;
  place-items: center;
  width: 80px;
  height: 80px;
  border-radius: 16px;
  background: #f3f4f6;
  color: #4b5563;
}
.method-title { line-height: 44px; font-size: 30px; font-weight: 600; }
.method-sub { font-size: 26px; color: #6b7280; }
.ledger { font-size: 26px; }
.ledger th, .ledger td { height: 51px; }
.people {
  display: grid;
  grid-template-columns: 1fr 1fr;
  gap: 24px;
  margin-top: auto;
  padding-top: 20px;
  border-top: 2px solid #f3f4f6;
}
.person { display: flex; align-items: center; gap: 20px; line-height: 33px; }
.face {
  flex: none;
  display: grid;
  place-items: center;
  width: 68px;
  height: 68px;
  border-radius: 50%;
  color: #fff;
  font-size: 24px;
  font-weight: 600;
}
.face-rider { background: linear-gradient(135deg, #fb7185, #e11d48); }
.face-driver { background: linear-gradient(135deg, #6366f1, #8b5cf6); }
.person-kind { font-size: 22px; font-weight: 500; letter-spacing: 1px; color: #6b7280; }
.person-name { font-size: 27px; font-weight: 600; }
.person-sub { display: flex; align-items: center; gap: 4px; font-size: 24px; color: #6b7280; }
.rating { width: 24px; height: 24px; color: #fbbf24; }
```
